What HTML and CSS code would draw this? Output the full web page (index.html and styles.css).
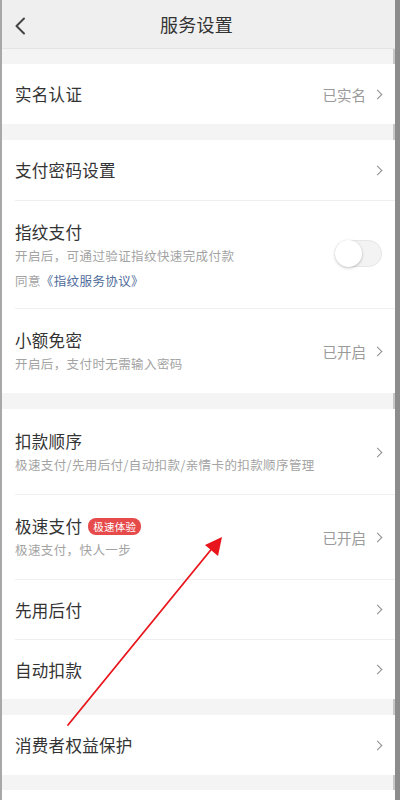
FILE: index.html
```html
<!DOCTYPE html>
<html lang="zh">
<head>
<meta charset="utf-8">
<link rel="stylesheet" href="styles.css">
</head>
<body>
<div class="screen">
  <header class="topbar">
    <svg class="back" width="12" height="18" viewBox="0 0 12 18"><path d="M10 1.5 L2.5 9 L10 16.5" fill="none" stroke="#444" stroke-width="2" stroke-linecap="round" stroke-linejoin="round"/></svg>
    <div class="title">服务设置</div>
  </header>

  <section class="group g1">
    <div class="row single"><div class="inner">
      <div class="main"><div class="name">实名认证</div></div>
      <div class="value">已实名</div><span class="chev"></span>
    </div></div>
  </section>

  <section class="group">
    <div class="row single"><div class="inner">
      <div class="main"><div class="name">支付密码设置</div></div>
      <span class="chev"></span>
    </div></div>
    <div class="row finger"><div class="inner">
      <div class="main">
        <div class="name">指纹支付</div>
        <div class="sub">开启后，可通过验证指纹快速完成付款</div>
        <div class="sub link-line">同意<span class="link">《指纹服务协议》</span></div>
      </div>
      <div class="toggle"><span class="knob"></span></div>
    </div></div>
    <div class="row double"><div class="inner">
      <div class="main">
        <div class="name">小额免密</div>
        <div class="sub">开启后，支付时无需输入密码</div>
      </div>
      <div class="value">已开启</div><span class="chev"></span>
    </div></div>
  </section>

  <section class="group">
    <div class="row double"><div class="inner">
      <div class="main">
        <div class="name">扣款顺序</div>
        <div class="sub">极速支付/先用后付/自动扣款/亲情卡的扣款顺序管理</div>
      </div>
      <span class="chev"></span>
    </div></div>
    <div class="row double"><div class="inner">
      <div class="main">
        <div class="name">极速支付<span class="badge">极速体验</span></div>
        <div class="sub">极速支付，快人一步</div>
      </div>
      <div class="value">已开启</div><span class="chev"></span>
    </div></div>
    <div class="row single"><div class="inner">
      <div class="main"><div class="name">先用后付</div></div>
      <span class="chev"></span>
    </div></div>
    <div class="row single"><div class="inner">
      <div class="main"><div class="name">自动扣款</div></div>
      <span class="chev"></span>
    </div></div>
  </section>

  <section class="group">
    <div class="row single"><div class="inner">
      <div class="main"><div class="name">消费者权益保护</div></div>
      <span class="chev"></span>
    </div></div>
  </section>

  <section class="group tail"></section>

  <svg class="arrow" width="400" height="800" viewBox="0 0 400 800">
    <line x1="68" y1="725" x2="214" y2="546" stroke="#e8161c" stroke-width="1.8" stroke-linecap="round"/>
    <polygon points="222,537 218,556 205,545" fill="#e8161c"/>
  </svg>
</div>
</body>
</html>
```

FILE: styles.css
```css
* { box-sizing: border-box; margin: 0; padding: 0; }
html, body { width: 400px; height: 800px; overflow: hidden; }
body {
  font-family: "Noto Sans CJK SC", "Noto Sans", sans-serif;
  color: #333;
  background: #f4f4f4;
}
.screen {
  position: relative;
  width: 400px;
  height: 800px;
  background: #f4f4f4;
  border-left: 2px solid #a8a8a8;
  border-right: 5px solid #8c8c8c;
  box-shadow: inset -2px 0 0 #c8c8c8;
  display: flex;
  flex-direction: column;
}
.topbar {
  height: 49px;
  background: #efefef;
  border-bottom: 1px solid #e4e4e4;
  display: flex;
  align-items: center;
  justify-content: center;
  position: relative;
}
.back { position: absolute; left: 12px; top: 17px; }
.title { font-size: 18px; color: #333; letter-spacing: 0.2px; margin-left: -4px; }
.group {
  background: #fff;
  margin-top: 16px;
  display: flex;
  flex-direction: column;
}
.g1 { margin-top: 15px; }
.tail { flex: 1; margin-top: 15px; }
.row { padding-left: 13px; }
.inner {
  display: flex;
  align-items: center;
  padding-right: 12px;
  border-top: 1px solid #efefef;
}
.row:first-child .inner { border-top: none; }
.single .inner { height: 60px; }
.double .inner { height: 85px; padding-top: 1px; }
.finger .inner { height: 108px; padding-top: 2px; }
.main { flex: 1; display: flex; flex-direction: column; }
.name {
  font-size: 16.5px;
  letter-spacing: 0.3px;
  line-height: 24px;
  color: #333;
  display: flex;
  align-items: center;
}
.sub {
  font-size: 12.5px;
  letter-spacing: 0.4px;
  line-height: 23px;
  color: #a3a3a3;
}
.link-line { margin-top: 2px; }
.link { color: #4f6c9a; }
.value {
  font-size: 14.5px;
  color: #9a9a9a;
  margin-right: 8px;
}
.chev {
  width: 7px;
  height: 7px;
  border-top: 1.6px solid #8d8d8d;
  border-right: 1.6px solid #8d8d8d;
  transform: rotate(45deg);
  margin-right: 2px;
}
.badge {
  display: inline-block;
  margin-left: 6px;
  background: #e64a4a;
  color: #fff;
  font-size: 10.5px;
  line-height: 17px;
  height: 17px;
  padding: 0 5px;
  border-radius: 8px;
  letter-spacing: 0.3px;
}
.toggle {
  width: 47px;
  height: 27px;
  border-radius: 14px;
  background: #f3f3f3;
  border: 1px solid #e6e6e6;
  display: flex;
  align-items: center;
  margin-right: 1px;
  margin-top: -4px;
}
.knob {
  width: 27px;
  height: 27px;
  border-radius: 50%;
  background: #fff;
  margin-left: -1px;
  box-shadow: 0 1px 3px rgba(0,0,0,0.25);
}
.arrow { position: absolute; left: -2px; top: 0; pointer-events: none; }
```
